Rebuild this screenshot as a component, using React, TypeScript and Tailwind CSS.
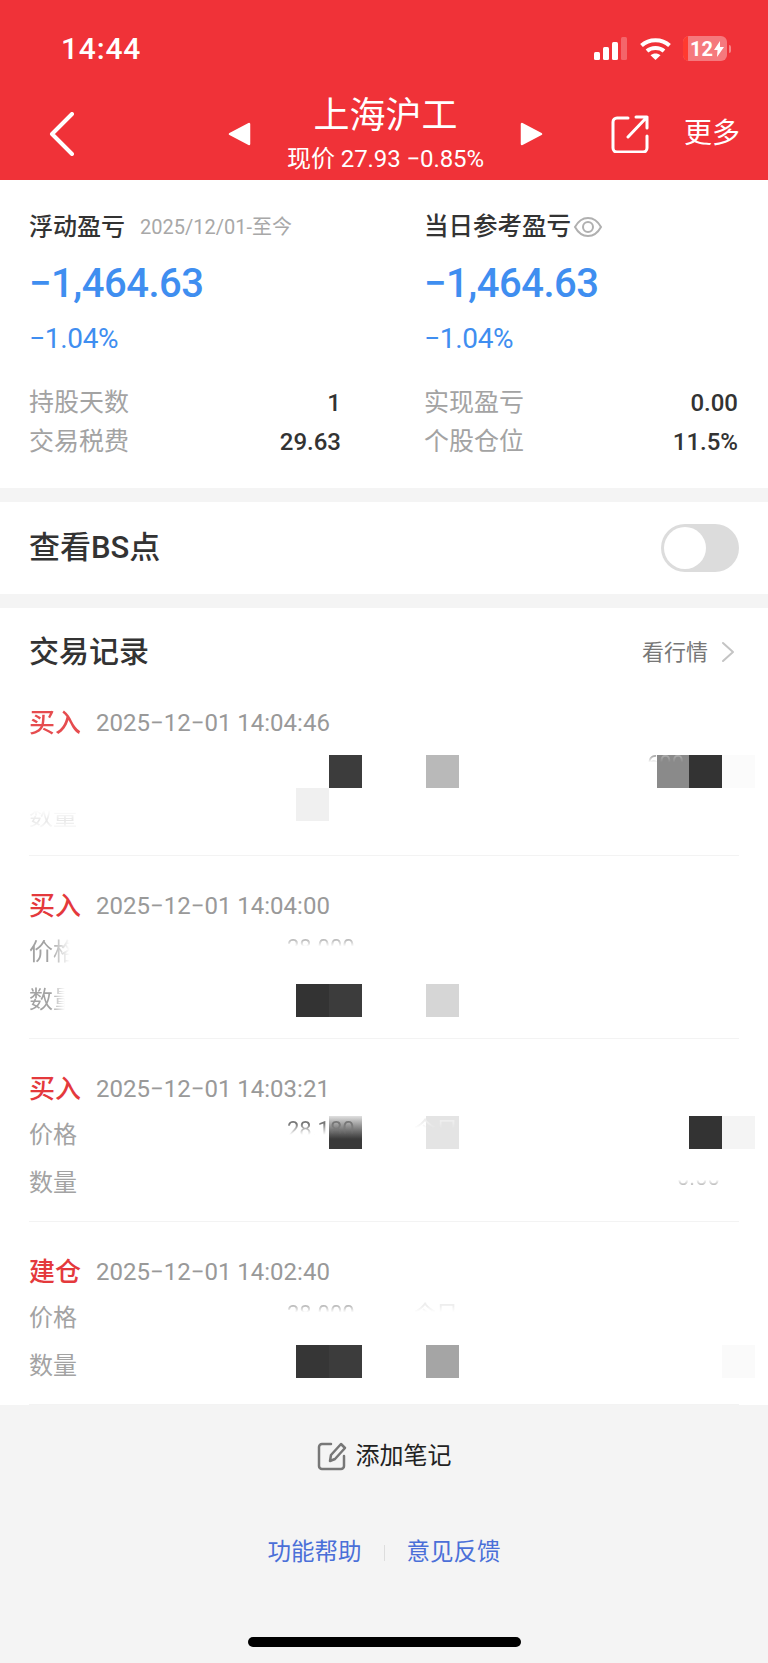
const fontStack = "font-['Roboto','Noto_Sans_CJK_SC',sans-serif]";

const topSliver = "[mask-image:linear-gradient(to_bottom,black_25%,transparent_45%)]";

const records = [
  {
    kind: "买入",
    kindClass: "text-[#e4393c] opacity-90",
    time: "2025−12−01 14:04:46",
    priceLabel: "",
    priceMask: "",
    qtyMask: "[mask-image:linear-gradient(to_bottom,transparent_30%,rgba(0,0,0,0.25)_60%,transparent_85%)]",
    tiles: [
      "left-[300px] top-[82px] bg-[#3c3c3c]",
      "left-[397px] top-[82px] bg-[#b9b9b9]",
      "left-[628px] top-[82px] bg-[#8a8a8a]",
      "left-[660px] top-[82px] bg-[#333333]",
      "left-[693px] top-[82px] bg-[#fbfbfb]",
      "left-[267px] top-[115px] bg-[#f0f0f0]",
    ],
    slivers: [{ text: "600", className: `left-[618px] top-[75px] text-[#aaaaaa] ${topSliver}` }],
  },
  {
    kind: "买入",
    kindClass: "text-[#e4393c]",
    time: "2025−12−01 14:04:00",
    priceLabel: "价格",
    priceMask: "[mask-image:linear-gradient(to_right,black_45%,transparent_85%)]",
    qtyMask: "[mask-image:linear-gradient(to_right,black_45%,transparent_75%)]",
    tiles: [
      "left-[267px] top-[128px] bg-[#333333]",
      "left-[300px] top-[128px] bg-[#3c3c3c]",
      "left-[397px] top-[128px] bg-[#d6d6d6]",
    ],
    slivers: [{ text: "28.000", className: `left-[258px] top-[76px] text-[#bbbbbb] ${topSliver}` }],
  },
  {
    kind: "买入",
    kindClass: "text-[#e4393c]",
    time: "2025−12−01 14:03:21",
    priceLabel: "价格",
    priceMask: "",
    qtyMask: "",
    tiles: [
      "left-[300px] top-[77px] bg-gradient-to-b from-[#e0e0e0] to-[#3a3a3a] to-70%",
      "left-[397px] top-[77px] bg-[#e4e4e4]",
      "left-[660px] top-[77px] bg-[#333333]",
      "left-[693px] top-[77px] bg-[#f4f4f4]",
    ],
    slivers: [
      {
        text: "28.180",
        className:
          "left-[258px] top-[75px] text-[#777777] [mask-image:linear-gradient(to_bottom,black_30%,transparent_65%)]",
      },
      { text: "今日", className: `left-[385px] top-[75px] text-[#eeeeee] ${topSliver}` },
      {
        text: "0.00",
        className:
          "left-[648px] top-[123px] text-[#bbbbbb] [mask-image:linear-gradient(to_bottom,transparent_55%,black_72%)]",
      },
    ],
  },
  {
    kind: "建仓",
    kindClass: "text-[#e4393c]",
    time: "2025−12−01 14:02:40",
    priceLabel: "价格",
    priceMask: "",
    qtyMask: "",
    tiles: [
      "left-[267px] top-[123px] bg-[#363636]",
      "left-[300px] top-[123px] bg-[#3c3c3c]",
      "left-[397px] top-[123px] bg-[#a5a5a5]",
      "left-[693px] top-[123px] bg-[#fafafa]",
    ],
    slivers: [
      { text: "28.000", className: `left-[258px] top-[76px] text-[#bbbbbb] ${topSliver}` },
      { text: "今日", className: `left-[385px] top-[76px] text-[#eeeeee] ${topSliver}` },
    ],
  },
];

function StatRow({ label, value }: { label: string; value: string }) {
  return (
    <div className="flex h-[39px] items-center justify-between">
      <span className="text-[25px] text-[#a3a3a3]">{label}</span>
      <span className="text-[24px] font-medium text-[#333333]">{value}</span>
    </div>
  );
}

function StatusIcons() {
  return (
    <div className="ml-auto mr-[37px] mt-[5px] flex items-center">
      <svg width="34" height="24" viewBox="0 0 34 24" className="fill-white">
        <rect x="0" y="15" width="6" height="8" rx="1.5" />
        <rect x="9" y="10" width="6" height="13" rx="1.5" />
        <rect x="18" y="5" width="6" height="18" rx="1.5" />
        <rect x="27" y="0" width="6" height="23" rx="1.5" fillOpacity="0.25" />
      </svg>
      <svg width="33" height="24" viewBox="0 0 33 24" fill="none" className="ml-[11px] stroke-white">
        <path d="M2.5 8.5C10 1.5 23 1.5 30.5 8.5" strokeWidth="4" />
        <path d="M8 14C12.5 10 20.5 10 25 14" strokeWidth="4" />
        <path d="M16.5 23L11.5 18.2C14.5 16 18.5 16 21.5 18.2Z" fill="white" stroke="none" />
      </svg>
      <div className="ml-[11px] flex items-center">
        <div className="flex h-[25px] w-[44px] items-center overflow-hidden rounded-[6px] bg-white/35">
          <div className="h-full w-[5px] bg-[#ff3a2f]" />
          <span className="ml-[2px] text-[20px] font-bold leading-none text-white">12</span>
          <svg width="10" height="16" viewBox="0 0 10 16" className="ml-[1px] fill-white">
            <path d="M6 0L0 9h3.5L3 16l7-10H6z" />
          </svg>
        </div>
        <div className="ml-[2px] h-[8px] w-[2px] rounded-r-full bg-white/40" />
      </div>
    </div>
  );
}

function Summary({ title, extra, rows }: { title: React.ReactNode; extra?: string; rows: string[][] }) {
  return (
    <>
      <div className="flex h-[32px] items-center">
        {title}
        {extra && <span className="ml-[15px] text-[20px] text-[#a8a8a8]">{extra}</span>}
      </div>
      <div className="mt-[17px] h-[48px] text-[40px] font-medium leading-[48px] tracking-[-0.5px] text-[#3f8ef0]">−1,464.63</div>
      <div className="mt-[13px] h-[36px] text-[28px] leading-[36px] tracking-[-0.3px] text-[#3f8ef0]">−1.04%</div>
      <div className="mt-[26px]">
        {rows.map(([label, value]) => (
          <StatRow key={label} label={label} value={value} />
        ))}
      </div>
    </>
  );
}

function Record({ item }: { item: (typeof records)[number] }) {
  return (
    <div className="relative mx-[29px] h-[183px] border-b border-[#f3f3f3] pt-[33px]">
      <div className="flex h-[34px] items-center">
        <span className={`text-[26px] font-medium ${item.kindClass}`}>{item.kind}</span>
        <span className="ml-[15px] text-[24px] text-[#999999]">{item.time}</span>
      </div>
      <div className="mt-[5px] flex h-[48px] items-center">
        <span className={`text-[24px] text-[#a3a3a3] ${item.priceMask}`}>{item.priceLabel}</span>
      </div>
      <div className="flex h-[48px] items-center">
        <span className={`text-[24px] text-[#a3a3a3] ${item.qtyMask}`}>数量</span>
      </div>
      {item.tiles.map((tile) => (
        <div key={tile} className={`absolute h-[33px] w-[33px] ${tile}`} />
      ))}
      {item.slivers.map((sliver) => (
        <span key={sliver.text} className={`absolute text-[22px] leading-[32px] ${sliver.className}`}>
          {sliver.text}
        </span>
      ))}
    </div>
  );
}

export default function App() {
  return (
    <div className={`flex h-[1663px] w-[768px] flex-col overflow-hidden bg-[#f4f4f4] ${fontStack}`}>
      <header className="h-[180px] shrink-0 bg-[#f03238] text-white">
        <div className="flex h-[88px] items-start pt-[31px]">
          <span className="ml-[61px] h-[36px] text-[30px] font-medium leading-[36px] tracking-[0.8px]">14:44</span>
          <StatusIcons />
        </div>
        <div className="flex h-[92px] items-center">
          <div className="w-[228px] pl-[49px]">
            <svg width="26" height="44" viewBox="0 0 26 44" fill="none" className="stroke-white">
              <path d="M23 2L3 22l20 20" strokeWidth="4" strokeLinecap="round" strokeLinejoin="round" />
            </svg>
          </div>
          <div className="flex w-[315px] items-center justify-between">
            <svg width="23" height="24" viewBox="0 0 23 24" className="fill-white stroke-white">
              <path d="M21 2v20L2 12z" strokeWidth="2.5" strokeLinejoin="round" />
            </svg>
            <div className="flex flex-col items-center">
              <span className="text-[36px] leading-[44px]">上海沪工</span>
              <span className="mt-[5px] text-[24px] leading-[32px] tracking-[-0.1px]">现价 27.93 −0.85%</span>
            </div>
            <svg width="23" height="24" viewBox="0 0 23 24" className="fill-white stroke-white">
              <path d="M2 2v20l19-10z" strokeWidth="2.5" strokeLinejoin="round" />
            </svg>
          </div>
          <svg width="38" height="38" viewBox="0 0 38 38" fill="none" className="ml-[68px] stroke-white">
            <path d="M17 3H6a4 4 0 0 0-4 4v26a4 4 0 0 0 4 4h26a4 4 0 0 0 4-4V21" strokeWidth="3" strokeLinecap="round" />
            <path d="M17 22L36 2M25 2h11v11" strokeWidth="3" strokeLinecap="round" strokeLinejoin="round" />
          </svg>
          <span className="ml-[35px] text-[28px]">更多</span>
        </div>
      </header>

      <section className="flex h-[308px] shrink-0 bg-white pl-[29px] pt-[31px]">
        <div className="w-[312px]">
          <Summary
            title={<span className="text-[24px] font-medium text-[#333333]">浮动盈亏</span>}
            extra="2025/12/01-至今"
            rows={[
              ["持股天数", "1"],
              ["交易税费", "29.63"],
            ]}
          />
        </div>
        <div className="ml-[83px] w-[314px]">
          <Summary
            title={
              <>
                <span className="text-[24.5px] font-medium text-[#333333]">当日参考盈亏</span>
                <svg width="30" height="22" viewBox="0 0 30 22" fill="none" className="ml-[2px] stroke-[#b0b0b0]">
                  <path d="M2 11C5 5.5 9.5 2 15 2s10 3.5 13 9c-3 5.5-7.5 9-13 9S5 16.5 2 11z" strokeWidth="2" />
                  <circle cx="15" cy="11" r="5" strokeWidth="2" />
                </svg>
              </>
            }
            rows={[
              ["实现盈亏", "0.00"],
              ["个股仓位", "11.5%"],
            ]}
          />
        </div>
      </section>

      <section className="mt-[14px] flex h-[92px] shrink-0 items-center justify-between bg-white px-[29px]">
        <span className="text-[31px] font-medium text-[#333333]">查看BS点</span>
        <div className="flex h-[48px] w-[78px] items-center rounded-full bg-[#dcdcdc] p-[3px]">
          <div className="h-[42px] w-[42px] rounded-full bg-white" />
        </div>
      </section>

      <section className="mt-[14px] h-[797px] shrink-0 bg-white">
        <div className="flex h-[65px] items-start justify-between pl-[29px] pr-[33px] pt-[24px]">
          <span className="text-[30px] font-medium leading-[40px] text-[#333333]">交易记录</span>
          <div className="flex h-[40px] items-center">
            <span className="text-[22px] text-[#777777]">看行情</span>
            <svg width="14" height="22" viewBox="0 0 14 22" fill="none" className="ml-[13px] stroke-[#c4c4c4]">
              <path d="M2 2l10 9-10 9" strokeWidth="2" strokeLinecap="round" strokeLinejoin="round" />
            </svg>
          </div>
        </div>
        {records.map((item) => (
          <Record key={item.time} item={item} />
        ))}
      </section>

      <footer className="flex-1">
        <div className="mt-[36px] flex h-[30px] items-center justify-center">
          <svg width="30" height="30" viewBox="0 0 30 30" fill="none" className="stroke-[#777777]">
            <path d="M14 3H5a3 3 0 0 0-3 3v19a3 3 0 0 0 3 3h19a3 3 0 0 0 3-3V15" strokeWidth="2.5" strokeLinecap="round" />
            <path d="M13 20l1-6 10-11 4 4-10 11z" strokeWidth="2.5" strokeLinejoin="round" />
          </svg>
          <span className="ml-[9px] text-[24px] text-[#222222]">添加笔记</span>
        </div>
        <div className="mt-[66px] flex h-[32px] items-center justify-center text-[23.5px] text-[#4a6fd8]">
          <span>功能帮助</span>
          <div className="mx-[22px] h-[16px] w-px bg-[#dddddd]" />
          <span>意见反馈</span>
        </div>
        <div className="mx-auto mt-[68px] h-[10px] w-[273px] rounded-full bg-black" />
      </footer>
    </div>
  );
}
